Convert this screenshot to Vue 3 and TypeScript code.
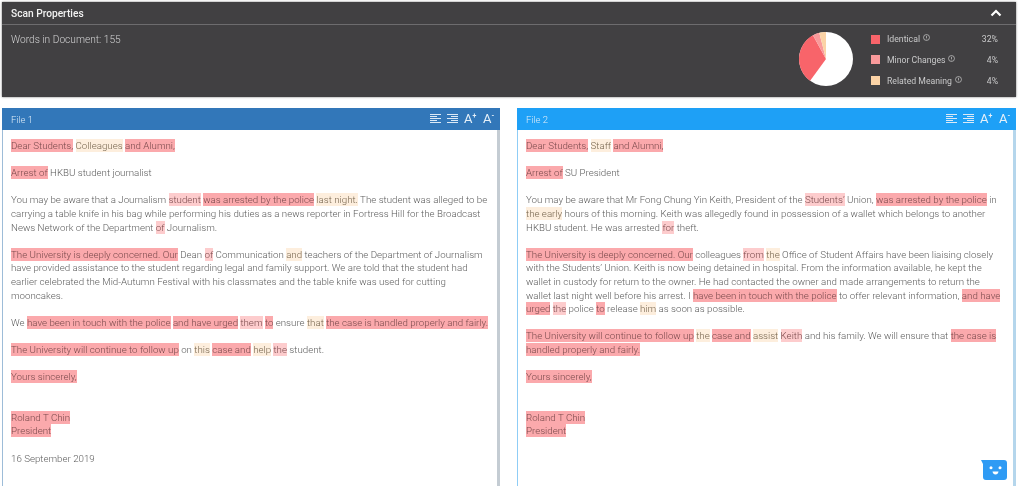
<script setup lang="ts">
type Seg = { text: string; cls: string }
const classes: Record<string, string> = { '#': 'identical', '~': 'minor', '%': 'related' }

function parse(line: string): Seg[] {
  const out: Seg[] = []
  const re = /([#~%])(.*?)\1|([^#~%]+)/g
  let m: RegExpExecArray | null
  while ((m = re.exec(line))) {
    if (m[1]) out.push({ text: m[2], cls: classes[m[1]] })
    else out.push({ text: m[3], cls: '' })
  }
  return out
}

const file1 = [
  ['#Dear Students,# %Colleagues% #and Alumni,#'],
  ['#Arrest of# HKBU student journalist'],
  [
    'You may be aware that a Journalism ~student~ #was arrested by the police# %last night.% The student was alleged to be',
    'carrying a table knife in his bag while performing his duties as a news reporter in Fortress Hill for the Broadcast',
    'News Network of the Department ~of~ Journalism.',
  ],
  [
    '#The University is deeply concerned. Our# Dean ~of~ Communication %and% teachers of the Department of Journalism',
    'have provided assistance to the student regarding legal and family support. We are told that the student had',
    'earlier celebrated the Mid-Autumn Festival with his classmates and the table knife was used for cutting',
    'mooncakes.',
  ],
  ['We #have been in touch with the police# #and have urged# ~them~ #to# ensure %that% #the case is handled properly and fairly.#'],
  ['#The University will continue to follow up# on %this% #case and# %help% ~the~ student.'],
  ['#Yours sincerely,#'],
  [],
  ['#Roland T Chin#', '#President#'],
  ['16 September 2019'],
]

const file2 = [
  ['#Dear Students,# %Staff% #and Alumni,#'],
  ['#Arrest of# SU President'],
  [
    'You may be aware that Mr Fong Chung Yin Keith, President of the ~Students’~ Union, #was arrested by the police# in',
    '%the early% hours of this morning. Keith was allegedly found in possession of a wallet which belongs to another',
    'HKBU student. He was arrested ~for~ theft.',
  ],
  [
    '#The University is deeply concerned. Our# colleagues ~from~ %the% Office of Student Affairs have been liaising closely',
    'with the Students’ Union. Keith is now being detained in hospital. From the information available, he kept the',
    'wallet in custody for return to the owner. He had contacted the owner and made arrangements to return the',
    'wallet last night well before his arrest. I #have been in touch with the police# to offer relevant information, #and have#',
    '#urged# ~the~ police #to# release %him% as soon as possible.',
  ],
  [
    '#The University will continue to follow up# %the% #case and# %assist% ~Keith~ and his family. We will ensure that #the case is#',
    '#handled properly and fairly.#',
  ],
  ['#Yours sincerely,#'],
  [],
  ['#Roland T Chin#', '#President#'],
]

const panels = [
  { title: 'File 1', cls: 'one', paras: file1.map((p) => p.map(parse)) },
  { title: 'File 2', cls: 'two', paras: file2.map((p) => p.map(parse)) },
]

const legend = [
  { label: 'Identical', value: '32%', color: '#f8646a' },
  { label: 'Minor Changes', value: '4%', color: '#f99a9b' },
  { label: 'Related Meaning', value: '4%', color: '#fbd3a6' },
]

function wedge(startDeg: number, endDeg: number): string {
  const r = 27
  const pt = (d: number) => {
    const a = (d * Math.PI) / 180
    return `${(27 + r * Math.sin(a)).toFixed(2)} ${(27 - r * Math.cos(a)).toFixed(2)}`
  }
  return `M27 27 L${pt(startDeg)} A${r} ${r} 0 0 1 ${pt(endDeg)} Z`
}
const slices = [
  { d: wedge(-144, -28.8), color: '#f8646a' },
  { d: wedge(-28.8, -14.4), color: '#f99a9b' },
  { d: wedge(-14.4, 0), color: '#fbd3a6' },
]
</script>

<template>
  <div class="page">
    <section class="props">
      <header class="props-head">
        <span>Scan Properties</span>
        <svg class="chev" width="12" height="8" viewBox="0 0 12 8" aria-hidden="true">
          <path d="M1.5 6.5 L6 2 L10.5 6.5" fill="none" stroke="#fff" stroke-width="2.2" />
        </svg>
      </header>
      <div class="props-body">
        <div class="words">Words in Document: 155</div>
        <svg class="pie" width="54" height="54" viewBox="0 0 54 54" aria-label="Similarity chart">
          <circle cx="27" cy="27" r="27" fill="#fff" />
          <path v-for="s in slices" :key="s.color" :d="s.d" :fill="s.color" />
        </svg>
        <ul class="legend">
          <li v-for="item in legend" :key="item.label">
            <i class="swatch" :style="{ background: item.color }"></i>
            <span class="label">{{ item.label }}</span>
            <svg class="info" width="7" height="7" viewBox="0 0 8 8" aria-hidden="true">
              <circle cx="4" cy="4" r="3.4" fill="none" stroke="#ccc" stroke-width="0.8" />
              <path d="M4 2v2.6M4 5.3v.8" stroke="#ccc" stroke-width="0.8" />
            </svg>
            <span class="value">{{ item.value }}</span>
          </li>
        </ul>
      </div>
    </section>

    <div class="files">
      <section v-for="panel in panels" :key="panel.title" class="file" :class="panel.cls">
        <header class="file-head">
          <span class="file-title">{{ panel.title }}</span>
          <div class="tools">
            <svg width="11" height="10" viewBox="0 0 11 10" aria-hidden="true">
              <path d="M0 .5h11M0 2.5h7M0 4.5h11M0 6.5h7M0 8.5h11" stroke="#dbe9f6" stroke-width="1" />
            </svg>
            <svg width="11" height="10" viewBox="0 0 11 10" aria-hidden="true">
              <path d="M0 .5h11M4 2.5h7M0 4.5h11M4 6.5h7M0 8.5h11" stroke="#dbe9f6" stroke-width="1" />
            </svg>
            <span class="font-btn">A<sup>+</sup></span>
            <span class="font-btn">A<sup>-</sup></span>
          </div>
        </header>
        <div class="doc">
          <p v-for="(para, i) in panel.paras" :key="i" class="para" :class="{ spacer: !para.length }">
            <span v-for="(line, j) in para" :key="j" class="line"><template v-for="(seg, k) in line" :key="k"><mark v-if="seg.cls" :class="seg.cls">{{ seg.text }}</mark><template v-else>{{ seg.text }}</template></template></span>
          </p>
        </div>
      </section>
    </div>

    <svg class="bot" width="27" height="22" viewBox="0 0 27 22" aria-label="Chat assistant">
      <path d="M0 1 L23 1 Q26 1 26 4 L26 18 Q26 21 23 21 L5 21 Q2 21 2 18 L2 5 Z" fill="#2f9bf4" />
      <circle cx="10" cy="8.7" r="1.5" fill="#fff" />
      <circle cx="19" cy="8.7" r="1.5" fill="#fff" />
      <path d="M11.5 12.5 H17.5 Q17 15.5 14.5 15.5 Q12 15.5 11.5 12.5 Z" fill="#fff" />
    </svg>
  </div>
</template>

<style>
html, body { margin: 0; background: #fff; overflow: hidden; }
</style>

<style scoped>
.page {
  position: relative;
  width: 1024px;
  height: 486px;
  box-sizing: border-box;
  padding: 2px 8px 0 2px;
  overflow: hidden;
  font-family: Roboto, "Liberation Sans", sans-serif;
  background: #fff;
  filter: blur(0.35px);
}
.props {
  height: 95px;
  background: #414042;
  box-shadow: 0 0 2px rgba(0, 0, 0, 0.55);
  display: flex;
  flex-direction: column;
}
.props-head {
  height: 22px;
  flex: none;
  border-bottom: 1px solid #6d6c6e;
  padding: 0 14px 0 9px;
  display: flex;
  align-items: center;
  justify-content: space-between;
  color: #f2f2f2;
  font-size: 10.2px;
  font-weight: 500;
}
.props-body {
  flex: 1;
  display: flex;
  align-items: flex-start;
  padding-left: 9px;
}
.words {
  margin-top: 9px;
  flex: 1;
  font-size: 10.2px;
  font-weight: 300;
  color: #d0d0d1;
}
.pie { margin: 7px 0 0; flex: none; }
.legend {
  list-style: none;
  margin: 9px 18px 0 18px;
  padding: 0;
  width: 127px;
  display: flex;
  flex-direction: column;
  gap: 10.8px;
}
.legend li {
  display: flex;
  align-items: center;
  height: 10px;
  font-size: 8.7px;
  color: #c9c9ca;
}
.swatch { width: 9px; height: 9px; margin-right: 7px; flex: none; }
.info { margin-left: 3px; margin-top: -3px; }
.value { margin-left: auto; }
.files {
  display: grid;
  grid-template-columns: 498px 499px;
  column-gap: 17px;
  margin-top: 11px;
}
.file { height: 380px; display: flex; flex-direction: column; }
.file-head {
  height: 22px;
  flex: none;
  display: flex;
  align-items: center;
  justify-content: space-between;
  padding: 0 4px 0 9px;
}
.one .file-head { background: #3277b9; }
.two .file-head { background: #1ea0f6; }
.file-title { font-size: 9.5px; font-weight: 300; color: #dcebf8; }
.tools { display: flex; align-items: center; gap: 6px; }
.font-btn {
  color: #e6f0f9;
  font-size: 13px;
  line-height: 12px;
  width: 13px;
  white-space: nowrap;
}
.font-btn sup { font-size: 7px; line-height: 0; font-weight: 700; }
.doc {
  flex: 1;
  padding: 9px 0 0 8px;
  border-left: 1px solid;
  border-right: 3px solid #c4ccd3;
  font-size: 9.72px;
  line-height: 13.6px;
  font-weight: 300;
  color: #5d5d5d;
}
.one .doc { border-left-color: #9dbcd8; }
.two .doc { border-left-color: #8fcdf6; border-right-color: #b5d6ec; }
.para { margin: 0 0 13.6px; }
.para.spacer { margin: 0; height: 13.6px; }
.line { display: block; white-space: nowrap; }
mark { color: #7a4a4c; padding: 1px 0; }
mark.identical { background: #fba9ac; }
mark.minor { background: #fdcccd; }
mark.related { background: #fdeedd; color: #77664f; }
.bot { position: absolute; left: 981px; top: 459px; }
</style>
